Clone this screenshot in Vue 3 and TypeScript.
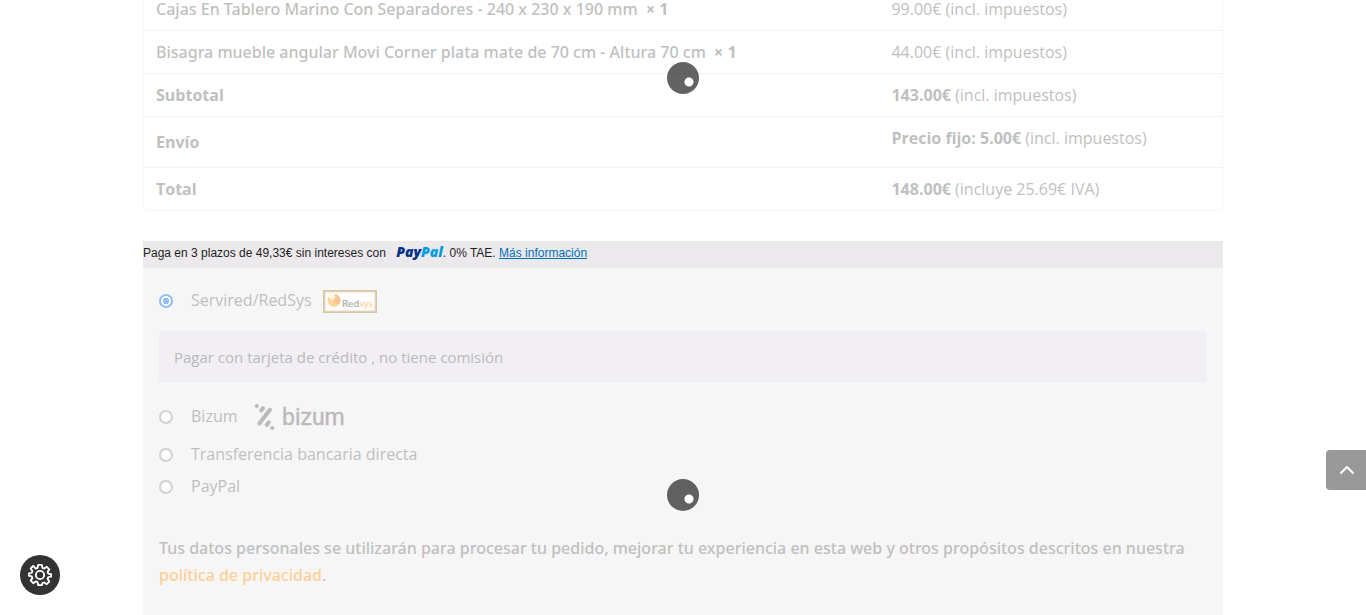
<script setup lang="ts">
import { ref } from 'vue'

interface OrderLine {
  name: string
  quantity: number
  price: string
}

const lines: OrderLine[] = [
  { name: 'Cajas En Tablero Marino Con Separadores - 240 x 230 x 190 mm', quantity: 1, price: '99.00€' },
  { name: 'Bisagra mueble angular Movi Corner plata mate de 70 cm - Altura 70 cm', quantity: 1, price: '44.00€' },
]

const method = ref('redsys')
</script>

<template>
  <main class="checkout">
    <section class="review">
      <table class="order">
        <tbody>
          <tr v-for="line in lines" :key="line.name">
            <td class="product">{{ line.name }}&nbsp; <strong>× {{ line.quantity }}</strong></td>
            <td>{{ line.price }} (incl. impuestos)</td>
          </tr>
          <tr>
            <th scope="row">Subtotal</th>
            <td><strong>143.00€</strong> (incl. impuestos)</td>
          </tr>
          <tr class="shipping">
            <th scope="row">Envío</th>
            <td><strong>Precio fijo: 5.00€</strong> (incl. impuestos)</td>
          </tr>
          <tr>
            <th scope="row">Total</th>
            <td><strong>148.00€</strong> (incluye 25.69€ IVA)</td>
          </tr>
        </tbody>
      </table>
      <div class="spinner review-spinner"></div>
    </section>

    <section class="payment">
      <p class="installments">
        Paga en 3 plazos de 49,33€ sin intereses con
        <span class="paypal"><span class="pay">Pay</span><span class="pal">Pal</span></span>. 0% TAE.
        <a href="#">Más información</a>
      </p>

      <div class="methods">
        <div class="method tall">
          <input id="redsys" v-model="method" type="radio" name="method" value="redsys" />
          <label for="redsys">
            Servired/RedSys
            <svg class="redsys-logo" width="54" height="23" viewBox="0 0 54 23" role="img" aria-label="Redsys">
              <rect x="1" y="1" width="52" height="21" fill="#fff" stroke="#cfc8ae" stroke-width="2" />
              <rect x="2" y="2" width="50" height="19" fill="none" stroke="#fbd6b8" />
              <circle cx="11" cy="10.500" r="6.500" fill="#fdd49a" />
              <path d="M11 4A6.500 6.500 0 0 1 17 13C15 15 10 14 11.500 10.500C13 8 12.500 6 11 4Z" fill="#fcc391" />
              <path d="M6 3L10.500 3.500C13 6 12 9.500 9 9.500C7 9.500 5.500 8 6 3Z" fill="#fff7e8" />
              <text x="19" y="17" class="redsys-text" fill="#b2b2b2">Red<tspan fill="#fbd79f">sys</tspan></text>
            </svg>
          </label>
        </div>
        <p class="description">Pagar con tarjeta de crédito , no tiene comisión</p>
        <div class="method tall">
          <input id="bizum" v-model="method" type="radio" name="method" value="bizum" />
          <label for="bizum">
            Bizum
            <svg class="bizum-logo" width="94" height="34" viewBox="0 -3 94 34" role="img" aria-label="bizum">
              <g stroke="#bababa" stroke-width="4" stroke-linecap="round">
                <path d="M2.800 4h.01M7.300 8.300L9 6M5.500 21.300L16 7.800M12.700 23L14.700 20.300M18.300 26h.01" />
              </g>
              <text x="28" y="23" class="bizum-text" fill="#bababa" stroke="#bababa">bizum</text>
            </svg>
          </label>
        </div>
        <div class="method">
          <input id="transfer" v-model="method" type="radio" name="method" value="transfer" />
          <label for="transfer">Transferencia bancaria directa</label>
        </div>
        <div class="method">
          <input id="paypal" v-model="method" type="radio" name="method" value="paypal" />
          <label for="paypal">PayPal</label>
        </div>
        <p class="privacy">
          Tus datos personales se utilizarán para procesar tu pedido, mejorar tu experiencia en esta web y otros
          propósitos descritos en nuestra <a href="#">política de privacidad</a>.
        </p>
      </div>
      <div class="spinner payment-spinner"></div>
    </section>
  </main>

  <button class="to-top" type="button" aria-label="Volver arriba">
    <svg width="16" height="10" viewBox="0 0 16 10" fill="none" stroke="#fff" stroke-width="2" stroke-linecap="round" stroke-linejoin="round">
      <path d="M2 8L8 2L14 8" />
    </svg>
  </button>
  <button class="settings" type="button" aria-label="Configuración">
    <svg width="24" height="24" viewBox="0 0 26 26" fill="none" stroke="#fff" stroke-width="2" stroke-linejoin="round">
      <path d="M11 2h4l.6 3.200 2 .8 2.700-1.900 2.800 2.800-1.900 2.700.8 2 3 .6v2.600l-3 .6-.8 2 1.900 2.700-2.800 2.800-2.700-1.900-2 .8L15 24h-4l-.6-3.200-2-.8-2.700 1.900-2.800-2.800 1.900-2.700-.8-2-3-.6v-2.600l3-.6.8-2-1.900-2.700 2.800-2.800L8.400 6l2-.8z" />
      <circle cx="13" cy="13" r="4.500" />
    </svg>
  </button>
</template>

<style>
body {
  margin: 0;
  background: #fff;
}
</style>

<style scoped>
.checkout {
  display: flex;
  flex-direction: column;
  gap: 30px;
  box-sizing: border-box;
  width: calc(100% - 40px);
  max-width: 1080px;
  min-height: calc(100vh + 13px);
  margin: -13px auto 0;
  font: 16px/27px 'Open Sans', sans-serif;
  color: #bfbfbf;
}

.review,
.payment {
  position: relative;
}

.order {
  width: 100%;
  border: 1px solid #f6f6f6;
  border-top: 0;
  border-radius: 5px;
  border-spacing: 0;
  table-layout: fixed;
}

.order th,
.order td {
  padding: 8px 12px 7px;
  border-top: 1px solid #f3f3f3;
  text-align: left;
}

.order th:first-child,
.order td:first-child {
  width: 66%;
}

.order th,
.order strong {
  font-family: 'Open Sans', sans-serif;
  font-weight: 700;
}

.order .product {
  font-family: 'Noto Sans', 'Open Sans', sans-serif;
  font-weight: 500;
}

.shipping td {
  padding-bottom: 15px;
}

.spinner {
  position: absolute;
  left: 50%;
  width: 32px;
  height: 32px;
  margin-left: -16px;
  border-radius: 50%;
  background: radial-gradient(circle at 22px 20px, #fff 4px, rgba(0, 0, 0, 0.61) 5px);
}

.review-spinner {
  top: 75px;
}

.payment-spinner {
  top: 238px;
}

.payment {
  flex: 1;
  background: #f6f6f6;
}

.installments {
  margin: 0;
  padding-bottom: 3px;
  background: #ebe9ec;
  font: 12px/24px 'Liberation Sans', Arial, sans-serif;
  color: #1f1f1f;
}

.installments a {
  color: #0070ba;
}

.paypal {
  margin-left: 7px;
  font: italic 800 14px/14px 'Open Sans', sans-serif;
}

.pay {
  color: #003087;
}

.pal {
  color: #009cde;
}

.methods {
  padding: 10px 16px 27px;
}

.method {
  display: flex;
  align-items: center;
  gap: 18px;
  height: 32px;
}

.method.tall {
  height: 44px;
}

.method input {
  appearance: none;
  box-sizing: border-box;
  width: 14px;
  height: 14px;
  margin: 2px 0 0;
  border: 2px solid #d0d0d5;
  border-radius: 50%;
  background: #fff;
}

.method input:checked {
  border-color: #94bdf5;
  background: radial-gradient(circle, #94bdf5 3px, #fff 3px);
}

.method label {
  display: flex;
  align-items: center;
  gap: 11px;
}

.redsys-logo {
  margin-top: 3px;
}

.redsys-text {
  font: 700 10px Lato, sans-serif;
}

.bizum-logo {
  margin-left: 5px;
}

.bizum-text {
  font: 400 23px Roboto, sans-serif;
  stroke-width: 0.4px;
}

.description {
  margin: 9px 0 11px;
  padding: 13px 15px 12px;
  border-radius: 2px;
  background: #f1eff4;
  font-size: 15px;
  color: #b9b9b9;
}

.privacy {
  margin: 33px 0 0;
  font-family: 'Noto Sans', 'Open Sans', sans-serif;
  font-weight: 500;
}

.privacy a {
  color: #ffcf98;
  text-decoration: none;
}

.to-top,
.settings {
  position: fixed;
  display: flex;
  align-items: center;
  justify-content: center;
  width: 40px;
  height: 40px;
  padding: 0;
  border: 0;
}

.to-top {
  right: 0;
  bottom: 125px;
  padding-left: 2px;
  border-radius: 4px 0 0 4px;
  background: #999;
}

.settings {
  bottom: 20px;
  left: 20px;
  border-radius: 50%;
  background: #333;
}
</style>
